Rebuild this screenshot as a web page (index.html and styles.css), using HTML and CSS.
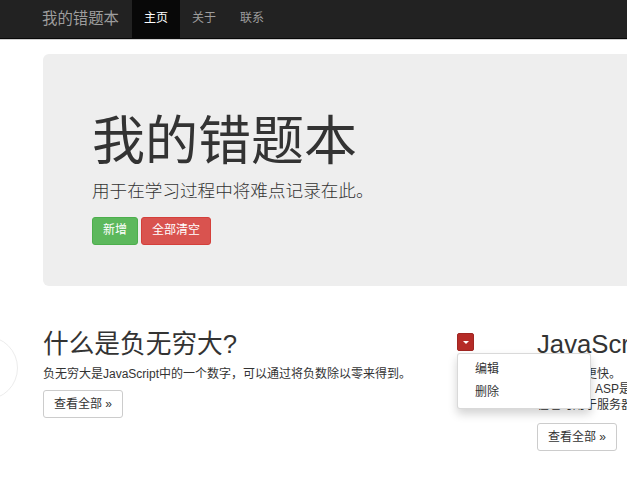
FILE: index.html
```html
<!DOCTYPE html>
<html lang="zh-CN">
<head>
<meta charset="utf-8">
<title>我的错题本</title>
<link rel="stylesheet" href="styles.css">
</head>
<body>
<nav class="navbar">
  <div class="nav-inner">
    <a class="brand" href="#">我的错题本</a>
    <ul class="nav">
      <li class="active"><a href="#">主页</a></li>
      <li><a href="#">关于</a></li>
      <li><a href="#">联系</a></li>
    </ul>
  </div>
</nav>

<div class="circle"></div>

<main class="container">
  <section class="jumbotron">
    <h1>我的错题本</h1>
    <p class="lead">用于在学习过程中将难点记录在此。</p>
    <div class="actions">
      <a class="btn btn-success" href="#">新增</a>
      <a class="btn btn-danger" href="#">全部清空</a>
    </div>
  </section>

  <div class="row">
    <div class="col col-first">
      <div class="dropdown">
        <button class="dd-toggle" type="button"><span class="caret"></span></button>
        <ul class="dd-menu">
          <li><a href="#">编辑</a></li>
          <li><a href="#">删除</a></li>
        </ul>
      </div>
      <h2>什么是负无穷大?</h2>
      <p>负无穷大是JavaScript中的一个数字，可以通过将负数除以零来得到。</p>
      <a class="btn btn-default" href="#">查看全部 »</a>
    </div>
    <div class="col">
      <h2>JavaScript为什么快?</h2>
      <p class="multi">
        <span class="line">运行速度更快。</span>
        <span class="line">比PHP，&nbsp;&nbsp; ASP是更轻量的脚本语言，现</span>
        <span class="line">在也可用于服务器端开发。</span>
      </p>
      <a class="btn btn-default" href="#">查看全部 »</a>
    </div>
  </div>
</main>
</body>
</html>
```

FILE: styles.css
```css
* { box-sizing: border-box; }

html, body {
  margin: 0;
  padding: 0;
  overflow: hidden;
}

body {
  position: relative;
  font-family: "Liberation Sans", "Noto Sans CJK SC", sans-serif;
  font-size: 12px;
  line-height: 1.42857;
  color: #333;
  background: #fff;
  width: 627px;
  height: 500px;
}

a { text-decoration: none; }

/* navbar */
.navbar {
  height: 39px;
  background: #222;
  border-bottom: 1px solid #080808;
  box-shadow: 0 1px 0 #d0d0d0;
}

.nav-inner {
  display: flex;
  height: 38px;
  padding-left: 29px;
}

.brand {
  display: flex;
  align-items: center;
  padding: 0 13px;
  font-size: 15.4px;
  color: #9d9d9d;
}

.nav {
  display: flex;
  margin: 0;
  padding: 0;
  list-style: none;
}

.nav li a {
  display: flex;
  align-items: center;
  height: 38px;
  padding: 0 12px;
  color: #9d9d9d;
  font-size: 12px;
}

.nav li.active a {
  background: #080808;
  color: #fff;
}

/* decorative circle */
.circle {
  position: absolute;
  left: -46px;
  top: 336px;
  width: 64px;
  height: 64px;
  border-radius: 50%;
  border: 1px solid #ececec;
}

/* container */
.container {
  width: 1020px;
  padding-left: 43px;
}

.jumbotron {
  margin-top: 15px;
  height: 232px;
  padding: 59px 49px 0;
  background: #eee;
  border-radius: 6px;
}

.jumbotron h1 {
  margin: 0;
  font-size: 53px;
  line-height: 58px;
  font-weight: 400;
  color: #333;
}

.lead {
  margin: 7px 0 13px;
  font-size: 17.6px;
  line-height: 26px;
  font-weight: 300;
  color: #333;
}

.actions {
  display: flex;
  gap: 3px;
}

.btn {
  display: inline-flex;
  align-items: center;
  justify-content: center;
  height: 28px;
  padding: 0 10px;
  font-size: 12px;
  border: 1px solid transparent;
  border-radius: 3px;
}

.btn-success {
  background: #5cb85c;
  border-color: #4cae4c;
  color: #fff;
}

.btn-danger {
  background: #d9534f;
  border-color: #d43f3a;
  color: #fff;
}

.btn-default {
  background: #fff;
  border-color: #ccc;
  color: #333;
}

/* row */
.row {
  display: flex;
  gap: 63px;
  margin-top: 26px;
}

.col {
  width: 431px;
  flex: none;
}

.col h2 {
  margin: 18px 0 9px;
  font-size: 25.7px;
  line-height: 28px;
  font-weight: 400;
  color: #333;
  white-space: nowrap;
}

.col p {
  margin: 0 0 8px;
  line-height: 15.4px;
}

.col p.multi { margin-bottom: 10px; }

.line {
  display: block;
  white-space: nowrap;
}

.dropdown {
  position: relative;
  float: right;
  margin-top: 21px;
  z-index: 5;
}

.dd-toggle {
  display: flex;
  align-items: center;
  justify-content: center;
  width: 17px;
  height: 18px;
  padding: 0;
  background: #b52b27;
  border: 1px solid #a02622;
  border-radius: 2px;
}

.caret {
  width: 0;
  height: 0;
  border-left: 3px solid transparent;
  border-right: 3px solid transparent;
  border-top: 3px solid #fff;
}

.dd-menu {
  position: absolute;
  top: 20px;
  left: 0;
  width: 134px;
  margin: 0;
  padding: 4px 0;
  list-style: none;
  background: #fff;
  border: 1px solid rgba(0, 0, 0, 0.15);
  border-radius: 3px;
  box-shadow: 0 5px 10px rgba(0, 0, 0, 0.175);
}

.dd-menu li a {
  display: block;
  padding: 3px 17px;
  line-height: 17px;
  color: #333;
  font-size: 12px;
}
```
